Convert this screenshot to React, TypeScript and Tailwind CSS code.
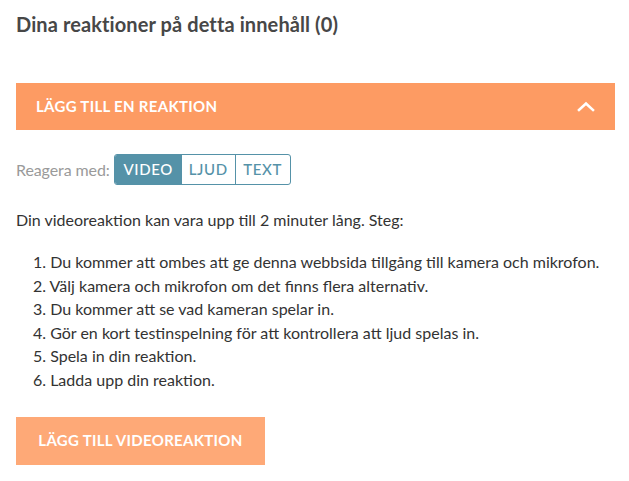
import React from "react";

const steps = [
  "Du kommer att ombes att ge denna webbsida tillgång till kamera och mikrofon.",
  "Välj kamera och mikrofon om det finns flera alternativ.",
  "Du kommer att se vad kameran spelar in.",
  "Gör en kort testinspelning för att kontrollera att ljud spelas in.",
  "Spela in din reaktion.",
  "Ladda upp din reaktion.",
];

export default function App() {
  return (
    <div className="w-[629px] h-[481px] bg-white pl-4 pt-[10px] font-['Lato','Liberation_Sans',sans-serif] text-[#333]">
      <h2 className="text-[20px] leading-[28px] font-bold tracking-[0.1px] text-[#474747]">
        Dina reaktioner på detta innehåll (0)
      </h2>

      {/* Collapsible header */}
      <div className="mt-[45px] w-[599px] h-[47px] bg-[#fd9b63] flex items-center justify-between pl-5 pr-[20px]">
        <span className="text-white font-bold text-[15px] tracking-[0.3px] uppercase">
          Lägg till en reaktion
        </span>
        <svg width="18" height="11" viewBox="0 0 18 11" fill="none">
          <path d="M2 9 L9 2.5 L16 9" stroke="white" strokeWidth="2.6" strokeLinecap="square" />
        </svg>
      </div>

      {/* Reaction type toggle */}
      <div className="mt-[24px] flex items-center gap-[4px]">
        <span className="text-[16px] text-[#9a9a9a] tracking-[-0.1px]">Reagera med:</span>
        <div className="flex h-[31px] border border-[#5592a8] rounded-[3px] overflow-hidden text-[15px] font-medium tracking-[0.6px]">
          <span className="w-[67px] flex items-center justify-center bg-[#5592a8] text-white">VIDEO</span>
          <span className="w-[54px] flex items-center justify-center text-[#5592a8] border-r border-[#5592a8]">LJUD</span>
          <span className="w-[54px] flex items-center justify-center text-[#5592a8]">TEXT</span>
        </div>
      </div>

      <p className="mt-[23px] text-[16px] leading-[24px]">
        Din videoreaktion kan vara upp till 2 minuter lång. Steg:
      </p>

      <ol className="mt-[18px] pl-[17px] text-[16px] leading-[23.6px]">
        {steps.map((s, i) => (
          <li key={i}>
            {i + 1}. {s}
          </li>
        ))}
      </ol>

      <button className="mt-[25px] h-[48px] w-[249px] bg-[#fea977] text-white font-bold text-[15px] tracking-[0.3px] uppercase">
        Lägg till videoreaktion
      </button>
    </div>
  );
}
